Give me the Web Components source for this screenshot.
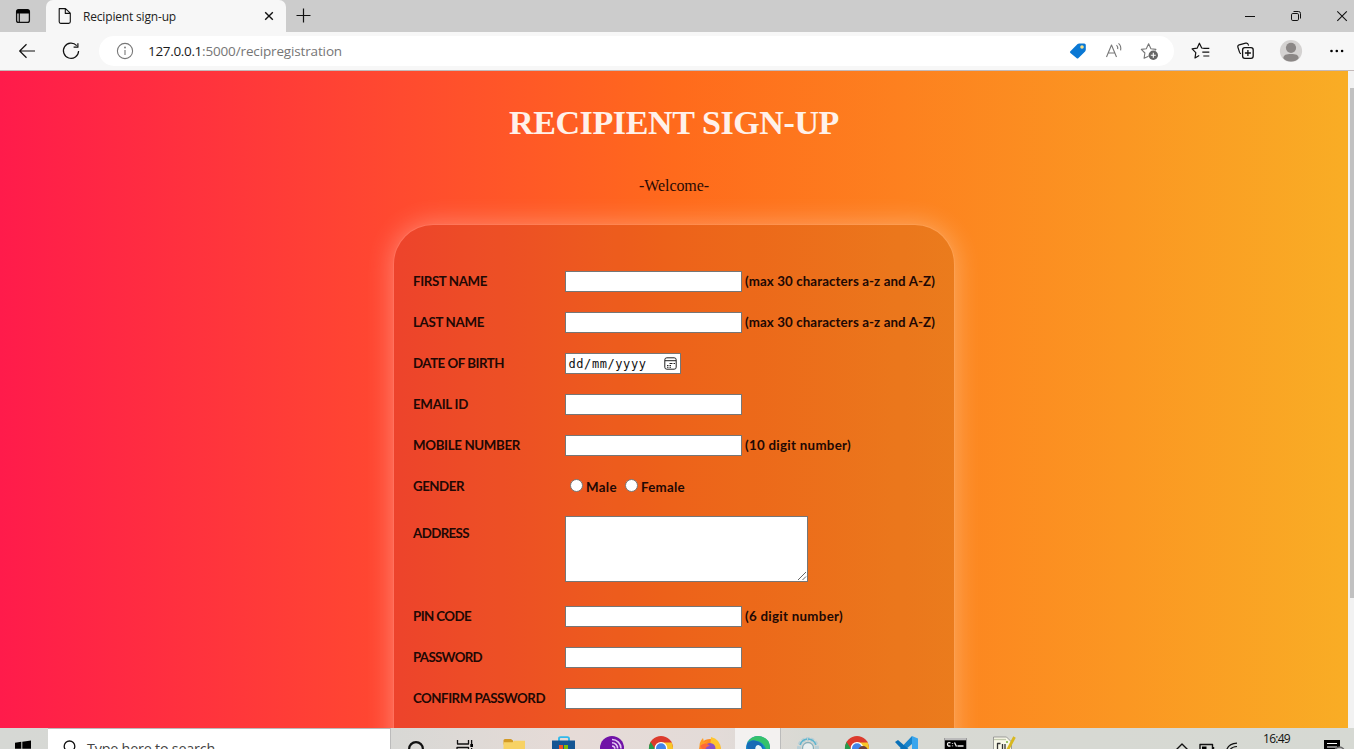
<!DOCTYPE html>
<html lang="en">
<head>
<meta charset="utf-8">
<title>Recipient sign-up</title>
<style>
html,body{margin:0;height:100%;overflow:hidden}
body{font-family:"Open Sans","Noto Sans",sans-serif}
</style>
</head>
<body>
<desktop-screen></desktop-screen>
<script>
function define(name, css, html, init) {
  const t = document.createElement('template');
  t.innerHTML = `<style>*{box-sizing:border-box}${css}</style>${html}`;
  customElements.define(name, class extends HTMLElement {
    connectedCallback() {
      if (this.shadowRoot) return;
      this.attachShadow({mode: 'open'}).append(t.content.cloneNode(true));
      if (init) init.call(this, this.shadowRoot);
    }
  });
}

/* Text run tracked to a set width */
define('fit-text', ':host{display:inline-block;white-space:pre}', '<slot></slot>', function () {
  const w = +this.getAttribute('w'), n = this.textContent.length;
  const real = this.getBoundingClientRect().width;
  if (real) this.style.letterSpacing = ((w - real) / n).toFixed(3) + 'px';
  this.style.width = w + 'px';
});

/* Line icons, centred in a box of their own width */
const icons = {
  tabs: '<rect x="5.600" y="5.600" width="12.800" height="12.800" rx="2" fill="none"/><path d="M5.500 9.500V7.500a2 2 0 0 1 2-2h9a2 2 0 0 1 2 2v2z" fill="#000" stroke="none"/><path d="M8.300 9v9" stroke-width="1.200"/>',
  page: '<path d="M6.200 4.600h6.300l4.800 4.600v8.600q0 1.600-1.600 1.600H7.700q-1.500 0-1.500-1.600zM12.300 4.800v4.600h4.800" fill="none" stroke-width="1.100"/>',
  x: '<path d="M8.200 8.200l7.600 7.600m0-7.600l-7.600 7.600" stroke-width="1.400"/>',
  plus: '<path d="M12 5v14M5 12h14" stroke-width="1.200" transform="translate(-.5 -.5)"/>',
  min: '<path d="M7 12.500h10" stroke-width="1"/>',
  restore: '<rect x="7.500" y="9.500" width="7" height="7" rx="1.300" fill="none" stroke-width="1"/><path d="M9.500 7.500h5q2 0 2 2v5" fill="none" stroke-width="1"/>',
  close: '<path d="M7.300 7.300l9.500 9.500m0-9.500l-9.500 9.500" stroke-width="1.100"/>',
  back: '<path d="M20 12H4.700m6.800-6.700L4.700 12l6.800 6.700" fill="none" stroke-width="1.200"/>',
  reload: '<path d="M17.700 6.700A7.600 7.600 0 1 0 19.600 12M18.900 4.200v4h-4.300" fill="none" stroke-width="1.200"/>',
  info: '<g stroke="#777" fill="none" stroke-width="1.100"><circle cx="12" cy="12" r="7.600"/><path d="M12 11v5"/></g><circle cx="12" cy="8.500" r=".9" fill="#777" stroke="none"/>',
  tag: '<path d="M4.400 12.300l7.200-7.200q.7-.7 1.600-.7h5q1.600 0 1.600 1.600v4.800q0 .9-.7 1.600l-6.600 6.700q-1 1-2 0l-6.100-5q-1-1 0-1.800z" fill="#0a78d4" stroke="none"/><circle cx="16" cy="8" r="1.800" fill="#f7e08a" stroke="none"/>',
  read: '<g stroke="#777" fill="none" stroke-width="1.100"><path d="M4.500 18L9.500 6l5 12M6.200 14h6.600M14.500 6.200q1.600 1.600 1.200 4M16.500 4.300q3 2.700 2.100 7"/></g>',
  fav: '<path d="M10.500 17.200l-4.400 2 .8-5.200-3.600-3.600 5-.7 2.300-4.900 2.300 4.900 5 .7-1 1" fill="none" stroke="#777" stroke-width="1.100"/><circle cx="15.300" cy="16.300" r="4.700" fill="#666" stroke="none"/><path d="M15.300 13.800v5M12.800 16.300h5" stroke="#fff" stroke-width="1.100"/>',
  favs: '<path d="M14.600 9.300l-2.700-.3L9.600 4.200 7.300 9.200l-5 .7 3.700 3.700L5.200 19l4.200-2.400M13.500 9.300h6M12.500 13.200h7M13.500 17h6" transform="translate(.8 0)" fill="none" stroke-width="1.200"/>',
  coll: '<rect x="8.600" y="8.700" width="10.600" height="10.600" rx="2.200" fill="none" stroke-width="1.300"/><path d="M13.900 11v6M10.900 14h6" stroke-width="1.300"/><path d="M7 14.700q-.9-.1-1.500-1.600L3.900 8.300q-.5-1.900 1.300-2.500l6.500-1.700q2-.4 2.500 1.300l.4 1.200" fill="none" stroke-width="1.200"/>',
  user: '<circle cx="12" cy="12" r="11.100" fill="#d4d2d1" stroke="none"/><circle cx="12" cy="8.800" r="5.100" fill="#8b8786" stroke="none"/><path d="M4.300 19.300c0-3.600 3-4.400 7.700-4.400s7.700.8 7.700 4.400Q17 22.500 12 22.500t-7.700-3.200z" fill="#8b8786" stroke="none"/>',
  dots: '<g stroke="none" fill="#000" transform="translate(.8 0)"><circle cx="6.700" cy="12" r="1.300"/><circle cx="12" cy="12" r="1.300"/><circle cx="17.300" cy="12" r="1.300"/></g>',
  win: '<g stroke="none" fill="#000"><path d="M4 5.700l6.300-.9v6.900H4zM11.300 4.700L20 3.500v8.200h-8.700zM4 12.600h6.300v7L4 18.700zM11.300 12.600H20v8.200l-8.700-1.200z"/></g>',
  search: '<circle cx="12.500" cy="9.300" r="5.300" fill="none" stroke-width="1.300"/><path d="M9 13.500l-5 6" stroke-width="1.300"/>',
  ring: '<circle cx="12" cy="12" r="6.900" fill="none" stroke-width="2.200"/>',
  view: '<path d="M4.500 4v4h11V4M4 11.500h11.500v8H4zM18.600 4v4m0 4v8" fill="none" stroke-width="1.300"/><path d="M17.300 8h2.700v3h-2.700z" fill="#000" stroke="none"/>',
  folder: '<g stroke="none"><path d="M1.500 4.500q0-1.500 1.500-1.500h6l2 1.500v4h-9.500z" fill="#d39a25"/><path d="M1.500 6.200h9l1.500-1.500h11V22h-21.500z" fill="#f7d264"/></g>',
  store: '<path d="M8 5V2.800q0-1.700 1.700-1.700h6.600q1.700 0 1.700 1.700V5" fill="none" stroke="#31b9eb" stroke-width="1.900"/><path d="M1 4.500h23V20H1z" fill="#145593" stroke="none"/><path d="M8 9h4v4H8z" fill="#f35325" stroke="none"/><path d="M13 9h4v4h-4z" fill="#81bc06" stroke="none"/>',
  tor: '<circle cx="12" cy="12" r="12" fill="#7012a7" stroke="none"/><g stroke="#e4c8f4" fill="none" stroke-width="1.600"><path d="M12 3.500a9 9 0 0 1 9 9M12 6.800a5.600 5.600 0 0 1 5.600 5.600M12 10a2.800 2.800 0 0 1 2.800 2.800"/></g>',
  chrome: '<g stroke="none"><circle cx="12" cy="12" r="12" fill="#dc3b2d"/><path d="M1.600 6L9 17.500l3 6.500A12 12 0 0 1 1.600 6z" fill="#269b4c"/><path d="M12 6.500h10.700Q24 9.500 24 12a12 12 0 0 1-12 12l5-9z" fill="#f8c629"/><circle cx="12" cy="12.300" r="6.300" fill="#fff"/><circle cx="12" cy="12.300" r="5" fill="#4385ea"/></g>',
  chrome2: '<g stroke="none"><circle cx="12" cy="12" r="12" fill="#dc3b2d"/><path d="M1.600 6L9 17.500l3 6.500A12 12 0 0 1 1.600 6z" fill="#269b4c"/><path d="M12 6.500h10.700Q24 9.500 24 12a12 12 0 0 1-12 12l5-9z" fill="#f8c629"/><circle cx="12" cy="12.300" r="6.300" fill="#fff"/><circle cx="12" cy="12.300" r="5" fill="#4385ea"/><circle cx="18" cy="15" r="5" fill="#704038"/></g>',
  fox: '<g stroke="none"><circle cx="12" cy="14" r="11" fill="#ff8a20"/><path d="M13 1q9 2 10 12H12z" fill="#ffc52f"/><path d="M1.500 12Q1 6 5 2l1 4 4-1z" fill="#ff9f24"/><circle cx="12" cy="12.500" r="5.500" fill="#8952c9"/><path d="M2 10q5-5 10 0-5 0-5 6z" fill="#ff6838"/></g>',
  edge: '<g stroke="none"><circle cx="12" cy="12" r="12" fill="#1689ca"/><path d="M1 7Q5 0 12 0q12 1 12 12l-3 4q-3-10-10-11Q4 3 1 7z" fill="#35c26b"/><path d="M1 8q5-6 12-2 5 3 4 7-2-5-6-3-3 2-2 6L6 20q-5-5-5-12z" fill="#176bb5"/><path d="M9.500 15q-1-6 3-6 4 1 4 6z" fill="#eaf3f6"/></g>',
  gear: '<circle cx="12" cy="12" r="9" fill="none" stroke="#b8cfd6" stroke-width="4" stroke-dasharray="3 1.500"/><path d="M12 3a9 9 0 0 1 8 6M4 9a9 9 0 0 1 7-6" fill="none" stroke="#5cb5ce" stroke-width="1.300"/><circle cx="12" cy="12" r="5.500" fill="#e9efef" stroke="#88afba"/>',
  code: '<g stroke="none"><path d="M18 0l6 2.500v19L18 24z" fill="#38a5ed"/><path d="M18 0v8L4 20l-3-2z" fill="#1784cc"/><path d="M1 6l3-2 14 12v8z" fill="#0870b8"/></g>',
  cmd: '<path d="M1.500 2.500h22v19h-22z" fill="#000" stroke="#999" stroke-width="1"/><path d="M2 2h21v2.300H2z" fill="#bbb" stroke="none"/><path d="M7.500 6.800q-3-.8-3 1.500t3 1.500M9.500 7v.8m0 1.600v.8M11.500 6.500l2 4M14.500 10h6" fill="none" stroke="#eee"/>',
  note: '<path d="M1.500 1h13l5 5v16h-18z" fill="#f8f8e9" stroke="#888" stroke-width=".8"/><path d="M2 3.500h12" stroke="#c2cbae" fill="none"/><path d="M5.500 15V7.500h3M10.500 8v5m2.500-5v5" fill="none" stroke="#333" stroke-width="1.300"/><path d="M22.500 1L14 17" stroke="#d8b820" stroke-width="2.800"/><path d="M14 6h2" stroke="#7ab536" stroke-width="1.500"/>',
  up: '<path d="M6.500 14.500L12 9l5.500 5.500" fill="none" stroke-width="1.400"/>',
  batt: '<path d="M5 9.500h12.500v9H5zM18.500 12v4" fill="none" stroke-width="1.400"/><path d="M7 11.500h4.500V18H7z" fill="#000" stroke="none"/>',
  wifi: '<g fill="none" stroke-width="1.200"><path d="M6 18Q7 8.500 17 8.200M9 18q.5-6 8-6.500M12.500 18q0-2.500 4.500-3"/></g>',
  msg: '<path d="M4 4h16v14H10l-4 3v-3H4z" fill="#000" stroke="none"/><path d="M7 7.500h10M7 11h10" stroke="#fff" stroke-width="1.200"/><circle cx="19.500" cy="16" r="5" fill="#bbb" stroke="#666"/>'
};
define('ui-icon', ':host{display:flex;flex:none;align-items:center;justify-content:center;height:24px;width:24px}svg{display:block;flex:none;overflow:visible}', '', function (root) {
  const s = document.createElement('div');
  s.innerHTML = `<svg width="24" height="24" viewBox="0 0 24 24" stroke="#111" stroke-width="1.300" stroke-linejoin="round">${icons[this.getAttribute('name')]}</svg>`;
  root.append(s);
});

define('tab-strip', `
:host{display:flex;height:32px;background:#ccc;align-items:center}
.lead{width:46px;display:flex;padding-left:11px}
.tab{width:240px;height:32px;background:#f7f7f7;border-radius:7px 7px 0 0;display:flex;align-items:center;padding-left:7px}
.t{flex:1;padding-left:6px;font-size:12px;color:#222}
.tab ui-icon:last-child{margin-right:5px}
.new{margin-left:6px}.sp{flex:1}.w{display:flex;gap:22px;margin-right:0}`,
`<div class="lead"><ui-icon name="tabs"></ui-icon></div>
<div class="tab"><ui-icon name="page"></ui-icon><div class="t"><fit-text w="93">Recipient sign-up</fit-text></div><ui-icon name="x"></ui-icon></div>
<ui-icon class="new" name="plus"></ui-icon><div class="sp"></div>
<div class="w"><ui-icon name="min"></ui-icon><ui-icon name="restore"></ui-icon><ui-icon name="close"></ui-icon></div>`);

define('address-bar', `
:host{display:flex;height:39px;background:#f7f7f7;align-items:center;border-bottom:1px solid #c3b9b9;padding:0 5px 0 15px}
.pill{height:30px;width:1075px;background:#fff;border-radius:15px;margin-left:16px;display:flex;align-items:center;padding:0 12px 0 14px}
.url{flex:1;padding-left:11px;font-size:13.500px;color:#1b1b1b;display:flex}.url .g{color:#767676}
.r{display:flex;gap:12px}.n{display:flex;gap:21px;margin-left:15px}.re{margin-left:20px}`,
`<ui-icon name="back"></ui-icon><ui-icon class="re" name="reload"></ui-icon>
<div class="pill"><ui-icon name="info"></ui-icon><div class="url"><fit-text w="54">127.0.0.1</fit-text><fit-text class="g" w="140">:5000/recipregistration</fit-text></div>
<div class="r"><ui-icon name="tag"></ui-icon><ui-icon name="read"></ui-icon><ui-icon name="fav"></ui-icon></div></div>
<div class="n"><ui-icon name="favs"></ui-icon><ui-icon name="coll"></ui-icon><ui-icon name="user"></ui-icon><ui-icon name="dots"></ui-icon></div>`);

define('text-box', ':host{display:block;width:177px;height:21px;background:#fff;border:1px solid #767676;box-sizing:border-box;flex:none}', '');

define('date-box', `:host{display:flex;align-items:center;width:116px;height:21px;background:#fff;border:1px solid #767676;box-sizing:border-box;padding:0 3px 0 2.500px;justify-content:space-between;color:#111;font:12px "DejaVu Sans Mono",monospace}`,
`<fit-text w="78">dd/mm/yyyy</fit-text><svg width="13" height="13" viewBox="0 0 13 13" fill="none" stroke="#222"><rect x=".8" y=".8" width="11.400" height="11.400" rx="2"/><path d="M1 3.700h11"/><path d="M3 8.500h1.500m1 0H7m0-2h1.500m1 0H11M5.500 6.500H7M3 10.300h1.500m1 0H7" stroke-width="1.100"/></svg>`);

define('area-box', `:host{display:flex;align-items:flex-end;justify-content:flex-end;width:243px;height:66px;background:#fff;border:1px solid #767676;box-sizing:border-box}svg{display:block}`,
`<svg width="10" height="10" viewBox="0 0 10 10" stroke="#555" stroke-width=".9"><path d="M1 9l8-8M5.500 9L9 5.500"/></svg>`);

define('radio-option', `:host{display:flex;align-items:center}i{width:13px;height:13px;border-radius:50%;background:#fff;border:1px solid #767676;margin:0 3px 2px 0}`, `<i></i><slot></slot>`);

define('form-row', `:host{display:flex;height:41px;align-items:center;padding-left:19px}.l{width:152px;flex:none;display:flex}.f{display:flex;align-items:center;gap:3px}::slotted(fit-text){padding-bottom:2px}`,
`<div class="l"><slot name="label"></slot></div><div class="f"><slot></slot></div>`);

define('signup-card', `
:host{display:block;width:562px;height:620px;flex:none;box-sizing:border-box;border:1px solid rgba(255,255,255,.22);border-radius:40px;background:rgba(0,0,0,.07);background-clip:padding-box;box-shadow:0 0 27px rgba(255,255,255,.33);padding-top:36px;font:bold 13.300px Lato,sans-serif;color:#210804}
form-row{padding-left:19px}
.addr{height:89px;align-items:flex-start}
.addr area-box{margin-top:9px}.addr [slot]{margin-top:18px}
.g{display:flex;gap:8px;padding:0 0 0 5px}`,
`<form-row><fit-text slot="label" w="74">FIRST NAME</fit-text><text-box></text-box><fit-text w="190">(max 30 characters a-z and A-Z)</fit-text></form-row>
<form-row><fit-text slot="label" w="71">LAST NAME</fit-text><text-box></text-box><fit-text w="190">(max 30 characters a-z and A-Z)</fit-text></form-row>
<form-row><fit-text slot="label" w="91">DATE OF BIRTH</fit-text><date-box></date-box></form-row>
<form-row><fit-text slot="label" w="55">EMAIL ID</fit-text><text-box></text-box></form-row>
<form-row><fit-text slot="label" w="107">MOBILE NUMBER</fit-text><text-box></text-box><fit-text w="106">(10 digit number)</fit-text></form-row>
<form-row><fit-text slot="label" w="51">GENDER</fit-text><div class="g"><radio-option><fit-text w="31">Male</fit-text></radio-option><radio-option><fit-text w="44">Female</fit-text></radio-option></div></form-row>
<form-row class="addr"><fit-text slot="label" w="56">ADDRESS</fit-text><area-box></area-box></form-row>
<form-row><fit-text slot="label" w="58">PIN CODE</fit-text><text-box></text-box><fit-text w="98">(6 digit number)</fit-text></form-row>
<form-row><fit-text slot="label" w="69">PASSWORD</fit-text><text-box></text-box></form-row>
<form-row><fit-text slot="label" w="132">CONFIRM PASSWORD</fit-text><text-box></text-box></form-row>`);

define('web-page', `
:host{display:flex;height:657px;overflow:hidden}
main{width:1348px;display:flex;flex-direction:column;align-items:center;overflow:hidden;background:linear-gradient(90deg,#ff1b4b,#ff6a1c 50%,#f9ad25)}
h1{margin:32px 0 0;font:bold 34px/39px "Liberation Serif",serif;color:#fff1ea}
p{margin:35px 0 0;font:16px/18px "Liberation Serif",serif;color:#2a0b04}
signup-card{margin-top:29px}
aside{width:6px;background:#f2f2f2;padding:17px 0 0 2px;display:flex;flex-direction:column}
aside b{height:510px;background:#c1c1c1}`,
`<main><h1><fit-text w="330">RECIPIENT SIGN-UP</fit-text></h1><p><fit-text w="70">-Welcome-</fit-text></p><signup-card></signup-card></main><aside><b></b></aside>`);

define('task-bar', `
:host{display:flex;height:21px;overflow:hidden;background:linear-gradient(90deg,#d6d8d4 0,#d8d8d5 29%,#e6dbd7 42%,#e3dbd8 53%,#d8d9d3 60%,#d6d9d3 100%)}
.s{width:48px;padding:9px 0 0 11px}
.q{width:343px;height:40px;background:#fff;display:flex;align-items:center;border:solid #bbb;border-width:1px 1px 0 0;padding-left:9px;font-size:14.300px;color:#444}
.q fit-text{margin:0 0 0 6px}
.a{display:flex}
.a>div{width:49px;height:40px;display:flex;justify-content:center;padding-top:8px}
.a>.on{background:#f3f1f0;width:46px;margin:0 2px 0 1px;border-right:1px solid #bbb;box-sizing:border-box}
.sp{flex:1}
.y{display:flex;gap:1px;padding-top:7px;margin-right:19px}
.c{font-size:12px;line-height:16px;color:#111;padding-top:3px;width:57px}
.m{padding:8px 10px 0 0}`,
`<div class="s"><ui-icon name="win"></ui-icon></div>
<div class="q"><ui-icon name="search"></ui-icon><fit-text w="128">Type here to search</fit-text></div>
<div class="a"></div><div class="sp"></div>
<div class="y"><ui-icon name="up"></ui-icon><ui-icon name="batt"></ui-icon><ui-icon name="wifi"></ui-icon></div>
<div class="c"><fit-text w="27">16:49</fit-text></div><div class="m"><ui-icon name="msg"></ui-icon></div>`, function (root) {
  const bar = root.querySelector('.a');
  for (const n of 'ring view folder store tor chrome fox edge gear chrome2 code cmd note'.split(' ')) {
    const d = document.createElement('div');
    if (n === 'edge') d.className = 'on';
    if (n === 'ring') d.style.paddingTop = '9px';
    d.innerHTML = `<ui-icon name="${n}"></ui-icon>`;
    bar.append(d);
  }
});

define('desktop-screen', ':host{display:flex;flex-direction:column;width:1354px;height:749px;overflow:hidden}',
'<tab-strip></tab-strip><address-bar></address-bar><web-page></web-page><task-bar></task-bar>');
</script>
</body>
</html>
